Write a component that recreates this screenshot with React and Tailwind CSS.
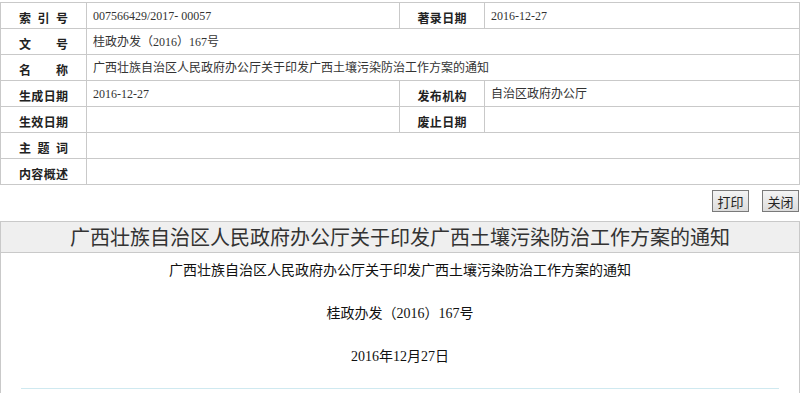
import React from "react";

const serif = "font-['Liberation_Serif','Noto_Sans_CJK_SC',serif]";
const sans = "font-['Noto_Sans_CJK_SC','Liberation_Sans',sans-serif]";

function Label({ text }) {
  const chars = text.replace(/\s/g, "").split("");
  return (
    <td className={`border border-[#c9c9c9] text-center align-middle p-0 ${sans}`}>
      <span className="inline-flex w-[49px] justify-between text-[12px] font-bold text-[#222] leading-none align-middle">
        {chars.map((c, i) => (
          <span key={i}>{c}</span>
        ))}
      </span>
    </td>
  );
}

function Value({ text, span }) {
  return (
    <td
      colSpan={span}
      className={`border border-[#c9c9c9] pl-[6px] text-[12px] text-[#333] align-middle ${serif}`}
    >
      {text}
    </td>
  );
}

export default function App() {
  return (
    <div className="w-[801px] h-[393px] overflow-hidden bg-white">
      <table className="mt-[2px] w-[800px] border-collapse table-fixed">
        <colgroup>
          <col className="w-[86px]" />
          <col className="w-[313px]" />
          <col className="w-[85px]" />
          <col />
        </colgroup>
        <tbody>
          <tr className="h-[26px]">
            <Label text="索引号" />
            <Value text="007566429/2017- 00057" />
            <Label text="著录日期" />
            <Value text="2016-12-27" />
          </tr>
          <tr className="h-[26px]">
            <Label text="文号" />
            <Value text="桂政办发（2016）167号" span={3} />
          </tr>
          <tr className="h-[26px]">
            <Label text="名称" />
            <Value
              text="广西壮族自治区人民政府办公厅关于印发广西土壤污染防治工作方案的通知"
              span={3}
            />
          </tr>
          <tr className="h-[26px]">
            <Label text="生成日期" />
            <Value text="2016-12-27" />
            <Label text="发布机构" />
            <Value text="自治区政府办公厅" />
          </tr>
          <tr className="h-[26px]">
            <Label text="生效日期" />
            <Value text="" />
            <Label text="废止日期" />
            <Value text="" />
          </tr>
          <tr className="h-[26px]">
            <Label text="主题词" />
            <Value text="" span={3} />
          </tr>
          <tr className="h-[26px]">
            <Label text="内容概述" />
            <Value text="" span={3} />
          </tr>
        </tbody>
      </table>

      <div className="flex justify-end gap-[13px] pr-[2px] mt-[5px]">
        {["打印", "关闭"].map((t) => (
          <button
            key={t}
            className={`w-[37px] h-[22px] border border-[#7a7a7a] bg-gradient-to-b from-[#f4f4f4] to-[#dcdcdc] text-[13px] text-[#222] leading-none ${sans}`}
          >
            {t}
          </button>
        ))}
      </div>

      <div className="mt-[9px] w-[800px] border-x border-[#c9c9c9]">
        <div
          className={`h-[32px] border-y border-[#c9c9c9] bg-[#efefef] flex items-center justify-center text-[20px] text-[#333] ${sans}`}
        >
          广西壮族自治区人民政府办公厅关于印发广西土壤污染防治工作方案的通知
        </div>
        <div className={`pt-[7px] text-center text-[14px] text-[#111] ${serif}`}>
          <p className="h-[22px] leading-[22px] mb-[21px]">
            广西壮族自治区人民政府办公厅关于印发广西土壤污染防治工作方案的通知
          </p>
          <p className="h-[22px] leading-[22px] mb-[21px]">桂政办发（2016）167号</p>
          <p className="h-[22px] leading-[22px]">2016年12月27日</p>
        </div>
        <div className="mt-[20px] mx-[20px] h-[10px] border-t border-[#cfe9f0]" />
      </div>
    </div>
  );
}
